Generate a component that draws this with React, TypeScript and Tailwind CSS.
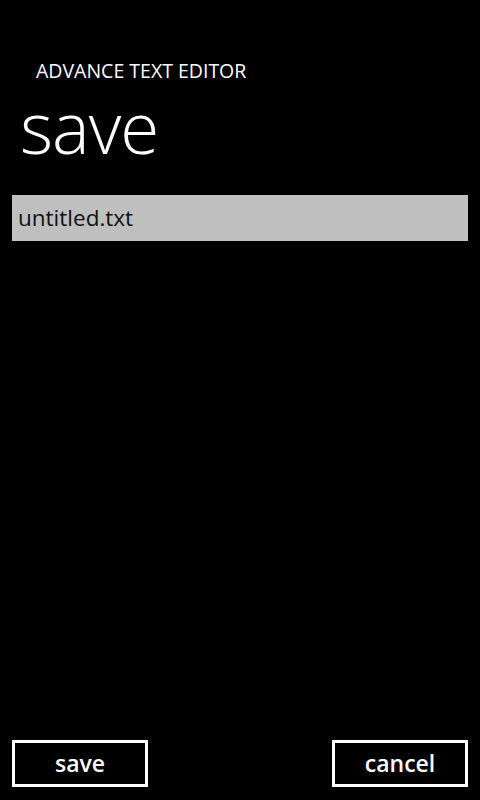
export default function App() {
  return (
    <div className="flex h-[800px] w-[480px] flex-col bg-black font-['Open_Sans',sans-serif] text-white">
      <div className="pl-9 pt-[61px] text-[19.5px] leading-[20px]">ADVANCE TEXT EDITOR</div>
      <div className="mt-[10px] pl-[20px] text-[71px] leading-none font-light tracking-[-1px]">save</div>
      <div className="px-3 pt-[33px]">
        <div className="flex h-[46px] items-center bg-[#bfbfbf] px-[6px] text-[22.5px] text-[#111]">
          untitled.txt
        </div>
      </div>
      <div className="flex-1" />
      <div className="flex justify-between px-3 pb-[13px]">
        <button className="flex h-[47px] w-[136px] items-center justify-center border-[3px] border-white text-[23px] font-semibold">
          save
        </button>
        <button className="flex h-[47px] w-[136px] items-center justify-center border-[3px] border-white text-[23px] font-semibold">
          cancel
        </button>
      </div>
    </div>
  );
}
